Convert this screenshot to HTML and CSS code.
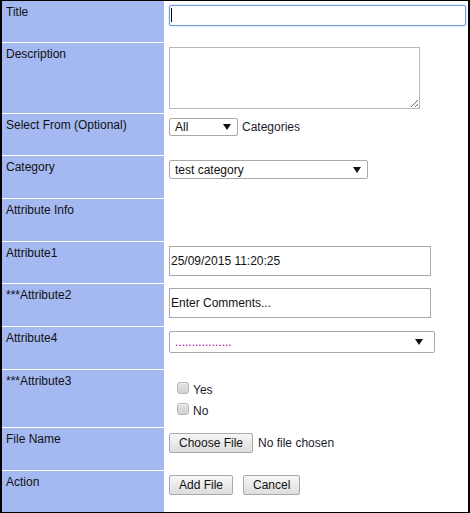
FILE: index.html
```html
<!DOCTYPE html>
<html>
<head>
<meta charset="utf-8">
<link rel="stylesheet" href="styles.css">
</head>
<body>
<div class="form">
  <div class="label">Title</div>
  <div class="field"><span class="focus-wrap"><input class="text title-input" type="text"><span class="caret"></span></span></div>

  <div class="label">Description</div>
  <div class="field"><textarea class="desc"></textarea></div>

  <div class="label">Select From (Optional)</div>
  <div class="field inline">
    <span class="select-wrap"><select class="select sel-all"><option>All</option></select><span class="arrow"></span></span>
    <span class="after">Categories</span>
  </div>

  <div class="label">Category</div>
  <div class="field"><span class="select-wrap"><select class="select sel-cat"><option>test category</option></select><span class="arrow"></span></span></div>

  <div class="label">Attribute Info</div>
  <div class="field"></div>

  <div class="label">Attribute1</div>
  <div class="field"><input class="text tall" type="text" value="25/09/2015 11:20:25"></div>

  <div class="label">***Attribute2</div>
  <div class="field"><input class="text tall" type="text" value="Enter Comments..."></div>

  <div class="label">Attribute4</div>
  <div class="field"><span class="select-wrap"><select class="select sel-attr4"><option>.................</option></select><span class="arrow arrow-far"></span></span></div>

  <div class="label">***Attribute3</div>
  <div class="field">
    <div class="checks">
      <label class="opt"><input type="checkbox" class="cb">Yes</label>
      <label class="opt"><input type="checkbox" class="cb">No</label>
    </div>
  </div>

  <div class="label">File Name</div>
  <div class="field inline file-row"><button class="btn btn-choose" type="button">Choose File</button><span class="after-file">No file chosen</span></div>

  <div class="label">Action</div>
  <div class="field inline actions"><button class="btn" type="button">Add File</button><button class="btn" type="button">Cancel</button></div>
</div>
</body>
</html>
```

FILE: styles.css
```css
* { box-sizing: border-box; }
html, body { margin: 0; padding: 0; background: #fff; }
body {
  font-family: "Liberation Sans", Arial, sans-serif;
  font-size: 12px;
  color: #111;
}
.form {
  width: 470px;
  height: 513px;
  display: grid;
  grid-template-columns: 162px 1fr;
  grid-template-rows: 41px 70px 41px 42px 42px 41px 42px 42px 57px 42px 41px;
  row-gap: 1px;
  border: 2px solid #000;
  border-top-width: 1px;
  border-bottom-width: 1px;
  background: #fff;
}
.label {
  background: #a4b9f1;
  padding: 4px 3px 0 4px;
  color: #111;
  line-height: 14px;
}
.field {
  padding: 4px 0 0 5px;
  color: #1c1c2c;
  line-height: 14px;
}
.inline {
  display: flex;
  align-items: center;
  align-self: start;
}
.focus-wrap { position: relative; display: inline-block; }
.text {
  font-family: inherit;
  font-size: 12px;
  color: #111;
  border: 1px solid #a9a9a9;
  padding: 0 1px;
  margin: 0;
  outline: none;
  display: block;
}
.title-input {
  width: 297px;
  height: 21px;
  border: 1px solid #6f9be0;
  border-radius: 2px;
  box-shadow: 0 0 2px #a8c6f4;
}
.caret {
  position: absolute;
  left: 2px;
  top: 3px;
  width: 1px;
  height: 14px;
  background: #000;
}
.desc {
  display: block;
  margin: 0;
  width: 251px;
  height: 62px;
  border: 1px solid #b8b8b8;
  font-family: inherit;
  font-size: 12px;
}
.tall {
  width: 262px;
  height: 30px;
}
.select-wrap { position: relative; display: inline-block; }
.select {
  -webkit-appearance: none;
  appearance: none;
  display: block;
  margin: 0;
  font-family: inherit;
  font-size: 12px;
  color: #111;
  background: #fff;
  border: 1px solid #a9a9a9;
  border-radius: 2px;
  padding: 0 0 0 5px;
  outline: none;
}
.sel-all { width: 69px; height: 18px; }
.sel-cat { width: 199px; height: 19px; }
.sel-attr4 { width: 266px; height: 22px; color: #a000a0; }
.arrow {
  position: absolute;
  right: 7px;
  top: 50%;
  margin-top: -3px;
  width: 0;
  height: 0;
  border-left: 4px solid transparent;
  border-right: 4px solid transparent;
  border-top: 6px solid #111;
  pointer-events: none;
}
.arrow-far { right: 12px; }
.after { margin-left: 4px; }
.checks { margin-top: 6px; padding-left: 8px; }
.opt {
  display: block;
  line-height: 21px;
  height: 21px;
}
.cb {
  -webkit-appearance: none;
  appearance: none;
  width: 12px;
  height: 12px;
  margin: 0 4px 0 0;
  vertical-align: 0px;
  border: 1px solid #b5b5b5;
  border-radius: 3px;
  background: linear-gradient(#e2e2e2, #d2d2d2);
  box-shadow: inset 0 1px 1px #f0f0f0;
}
.btn {
  font-family: inherit;
  font-size: 12px;
  color: #111;
  height: 20px;
  padding: 0 9px;
  margin: 0;
  border: 1px solid #a9a9a9;
  border-radius: 2px;
  background: linear-gradient(#f7f7f7, #dddddd);
  line-height: 18px;
}
.file-row { padding-top: 5px; }
.after-file { margin-left: 5px; }
.actions { gap: 10px; }
```
